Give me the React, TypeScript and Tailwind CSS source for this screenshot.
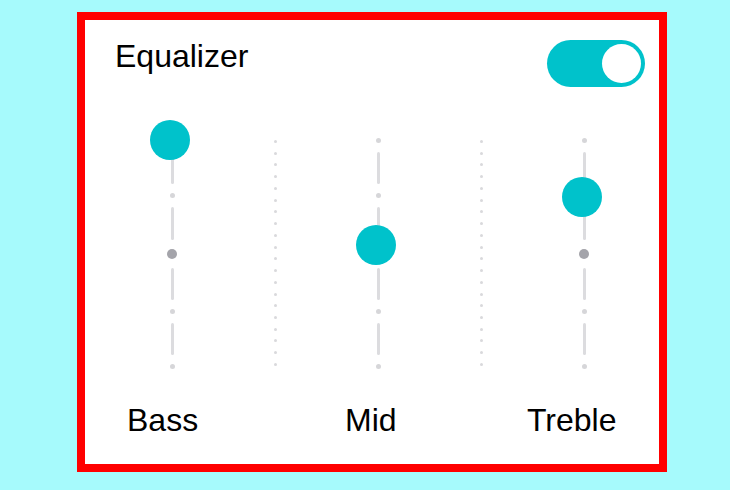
import React from 'react';

type Band = { label: string; value: number; };

// value runs from 0 (bottom) to 1 (top); the knob is 40px tall and the track spans 226px
const bands: Band[] = [
  { label: 'Bass', value: 1 },
  { label: 'Mid', value: 0.535 },
  { label: 'Treble', value: 0.75 },
];

const TRACK = 226;

const Segment: React.FC = () => <div className="flex-1 w-[3px] my-[9px] bg-[#dcdcdf] rounded-full" />;
const Tick: React.FC<{ big?: boolean }> = ({ big }) =>
  big ? (
    <div className="w-[10px] h-[10px] rounded-full bg-[#a4a4aa] shrink-0" />
  ) : (
    <div className="w-[5px] h-[5px] rounded-full bg-[#d6d6d9] shrink-0" />
  );

const Slider: React.FC<{ band: Band }> = ({ band }) => {
  const top = Math.round((1 - band.value) * TRACK);
  return (
    <div className="relative w-[40px] h-[266px] flex flex-col items-center pt-[18px] pb-[17px]">
      <Tick />
      <Segment />
      <Tick />
      <Segment />
      <Tick big />
      <Segment />
      <Tick />
      <Segment />
      <Tick />
      <div
        className="absolute left-[-2px] w-[40px] h-[40px] rounded-full bg-[#00c2cb]"
        style={{ top }}
      />
    </div>
  );
};

const Divider: React.FC = () => (
  <div className="w-[40px] h-[266px] flex justify-center pt-[20px] pb-[20px]">
    <div className="h-full flex flex-col justify-between items-center">
      {Array.from({ length: 20 }).map((_, i) => (
        <div key={i} className="w-[3px] h-[3px] rounded-full bg-[#d9d9dc]" />
      ))}
    </div>
  </div>
);

export default function App() {
  return (
    <div
      className="w-[730px] h-[490px] bg-[#a6fafc] pl-[77px] pt-[12px]"
      style={{ fontFamily: '"Liberation Sans", Arial, sans-serif' }}
    >
      <div className="w-[590px] h-[460px] border-[8px] border-[#ff0000] bg-white flex flex-col">
        <header className="flex items-start justify-between pl-[30px] pr-[14px] pt-[18px]">
          <h1 className="text-[32px] leading-[36px] text-black">Equalizer</h1>
          <div className="mt-[2px] w-[98px] h-[47px] rounded-full bg-[#00c2cb] flex items-center justify-end p-[4px]">
            <div className="w-[39px] h-[39px] rounded-full bg-white" />
          </div>
        </header>

        <div className="mt-[33px] flex items-start pl-[67px] gap-[63px]">
          <Slider band={bands[0]} />
          <Divider />
          <Slider band={bands[1]} />
          <Divider />
          <Slider band={bands[2]} />
        </div>

        <div className="mt-[16px] grid grid-cols-[218px_182px_auto] pl-[42px]">
          {bands.map((b) => (
            <div key={b.label} className="text-[32px] leading-[36px] text-black">
              {b.label}
            </div>
          ))}
        </div>
      </div>
    </div>
  );
}
